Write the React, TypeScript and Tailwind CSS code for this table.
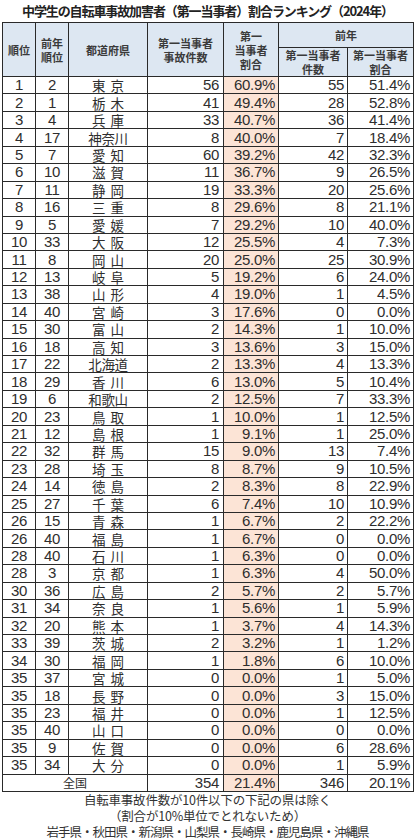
import React from "react";

type Row = [string, string, string, string, string, string, string];

const rows: Row[] = [
  ["1", "2", "東京", "56", "60.9%", "55", "51.4%"],
  ["2", "1", "栃木", "41", "49.4%", "28", "52.8%"],
  ["3", "4", "兵庫", "33", "40.7%", "36", "41.4%"],
  ["4", "17", "神奈川", "8", "40.0%", "7", "18.4%"],
  ["5", "7", "愛知", "60", "39.2%", "42", "32.3%"],
  ["6", "10", "滋賀", "11", "36.7%", "9", "26.5%"],
  ["7", "11", "静岡", "19", "33.3%", "20", "25.6%"],
  ["8", "16", "三重", "8", "29.6%", "8", "21.1%"],
  ["9", "5", "愛媛", "7", "29.2%", "10", "40.0%"],
  ["10", "33", "大阪", "12", "25.5%", "4", "7.3%"],
  ["11", "8", "岡山", "20", "25.0%", "25", "30.9%"],
  ["12", "13", "岐阜", "5", "19.2%", "6", "24.0%"],
  ["13", "38", "山形", "4", "19.0%", "1", "4.5%"],
  ["14", "40", "宮崎", "3", "17.6%", "0", "0.0%"],
  ["15", "30", "富山", "2", "14.3%", "1", "10.0%"],
  ["16", "18", "高知", "3", "13.6%", "3", "15.0%"],
  ["17", "22", "北海道", "2", "13.3%", "4", "13.3%"],
  ["18", "29", "香川", "6", "13.0%", "5", "10.4%"],
  ["19", "6", "和歌山", "2", "12.5%", "7", "33.3%"],
  ["20", "23", "鳥取", "1", "10.0%", "1", "12.5%"],
  ["21", "12", "島根", "1", "9.1%", "1", "25.0%"],
  ["22", "32", "群馬", "15", "9.0%", "13", "7.4%"],
  ["23", "28", "埼玉", "8", "8.7%", "9", "10.5%"],
  ["24", "14", "徳島", "2", "8.3%", "8", "22.9%"],
  ["25", "27", "千葉", "6", "7.4%", "10", "10.9%"],
  ["26", "15", "青森", "1", "6.7%", "2", "22.2%"],
  ["26", "40", "福島", "1", "6.7%", "0", "0.0%"],
  ["28", "40", "石川", "1", "6.3%", "0", "0.0%"],
  ["28", "3", "京都", "1", "6.3%", "4", "50.0%"],
  ["30", "36", "広島", "2", "5.7%", "2", "5.7%"],
  ["31", "34", "奈良", "1", "5.6%", "1", "5.9%"],
  ["32", "20", "熊本", "1", "3.7%", "4", "14.3%"],
  ["33", "39", "茨城", "2", "3.2%", "1", "1.2%"],
  ["34", "30", "福岡", "1", "1.8%", "6", "10.0%"],
  ["35", "37", "宮城", "0", "0.0%", "1", "5.0%"],
  ["35", "18", "長野", "0", "0.0%", "3", "15.0%"],
  ["35", "23", "福井", "0", "0.0%", "1", "12.5%"],
  ["35", "40", "山口", "0", "0.0%", "0", "0.0%"],
  ["35", "9", "佐賀", "0", "0.0%", "6", "28.6%"],
  ["35", "34", "大分", "0", "0.0%", "1", "5.9%"],
];

const cell = "border border-[#2a2a2a] p-0";
const head =
  "border border-[#2a2a2a] p-0 bg-[#dde7f2] text-[11px] font-bold leading-[14px] text-[#3a3a3a] text-center align-middle";
const num = "font-['Liberation_Sans',sans-serif] text-[15px] leading-[16px] tracking-[-0.3px]";

function Name({ name }: { name: string }) {
  if (name.length === 2) {
    return (
      <div className="flex justify-center gap-[5px] text-[13.5px] leading-[16px]">
        <span>{name[0]}</span>
        <span>{name[1]}</span>
      </div>
    );
  }
  return <div className="text-center text-[13.5px] leading-[16px] tracking-[-0.3px]">{name}</div>;
}

export default function App() {
  return (
    <div className="w-[415px] bg-white text-[#2e2e2e] font-['Noto_Sans_CJK_JP',sans-serif]">
      <div className="h-[22px] flex items-center justify-center text-[13px] font-bold tracking-[-1.1px] text-[#222]">
        中学生の自転車事故加害者（第一当事者）割合ランキング（2024年）
      </div>
      <table className="table-fixed border-collapse ml-[2px] w-[411px] border-[1.5px] border-[#222]">
        <colgroup>
          <col className="w-[33px]" />
          <col className="w-[33px]" />
          <col className="w-[79px]" />
          <col className="w-[76px]" />
          <col className="w-[55px]" />
          <col className="w-[69px]" />
          <col className="w-[66px]" />
        </colgroup>
        <thead>
          <tr className="h-[25px]">
            <th rowSpan={2} className={head}>順位</th>
            <th rowSpan={2} className={head}>
              前年
              <br />
              順位
            </th>
            <th rowSpan={2} className={head}>都道府県</th>
            <th rowSpan={2} className={head}>
              第一当事者
              <br />
              事故件数
            </th>
            <th rowSpan={2} className={head}>
              第一
              <br />
              当事者
              <br />
              割合
            </th>
            <th colSpan={2} className={head}>前年</th>
          </tr>
          <tr className="h-[26px]">
            <th className={head + " leading-[12px]"}>
              第一当事者
              <br />
              件数
            </th>
            <th className={head + " leading-[12px]"}>
              第一当事者
              <br />
              割合
            </th>
          </tr>
        </thead>
        <tbody>
          {rows.map((r, i) => (
            <tr key={i} className="h-[17.45px]">
              <td className={cell + " text-center " + num}>{r[0]}</td>
              <td className={cell + " text-center " + num}>{r[1]}</td>
              <td className={cell}>
                <Name name={r[2]} />
              </td>
              <td className={cell + " text-right pr-[4px] " + num}>{r[3]}</td>
              <td className={cell + " text-right pr-[3px] bg-[#fce4d6] " + num}>{r[4]}</td>
              <td className={cell + " text-right pr-[3px] " + num}>{r[5]}</td>
              <td className={cell + " text-right pr-[3px] " + num}>{r[6]}</td>
            </tr>
          ))}
          <tr className="h-[17px]">
            <td colSpan={3} className={cell + " text-center text-[12px] leading-[16px]"}>全国</td>
            <td className={cell + " text-right pr-[4px] " + num}>354</td>
            <td className={cell + " text-right pr-[3px] bg-[#fce4d6] " + num}>21.4%</td>
            <td className={cell + " text-right pr-[3px] " + num}>346</td>
            <td className={cell + " text-right pr-[3px] " + num}>20.1%</td>
          </tr>
        </tbody>
      </table>
      <div className="flex flex-col items-center text-[12.5px] leading-[16px] text-[#333]">
        <div className="tracking-[-0.2px]">自転車事故件数が10件以下の下記の県は除く</div>
        <div className="tracking-[-0.2px]">（割合が10%単位でとれないため）</div>
        <div className="tracking-[-1px]">岩手県・秋田県・新潟県・山梨県・長崎県・鹿児島県・沖縄県</div>
      </div>
    </div>
  );
}
